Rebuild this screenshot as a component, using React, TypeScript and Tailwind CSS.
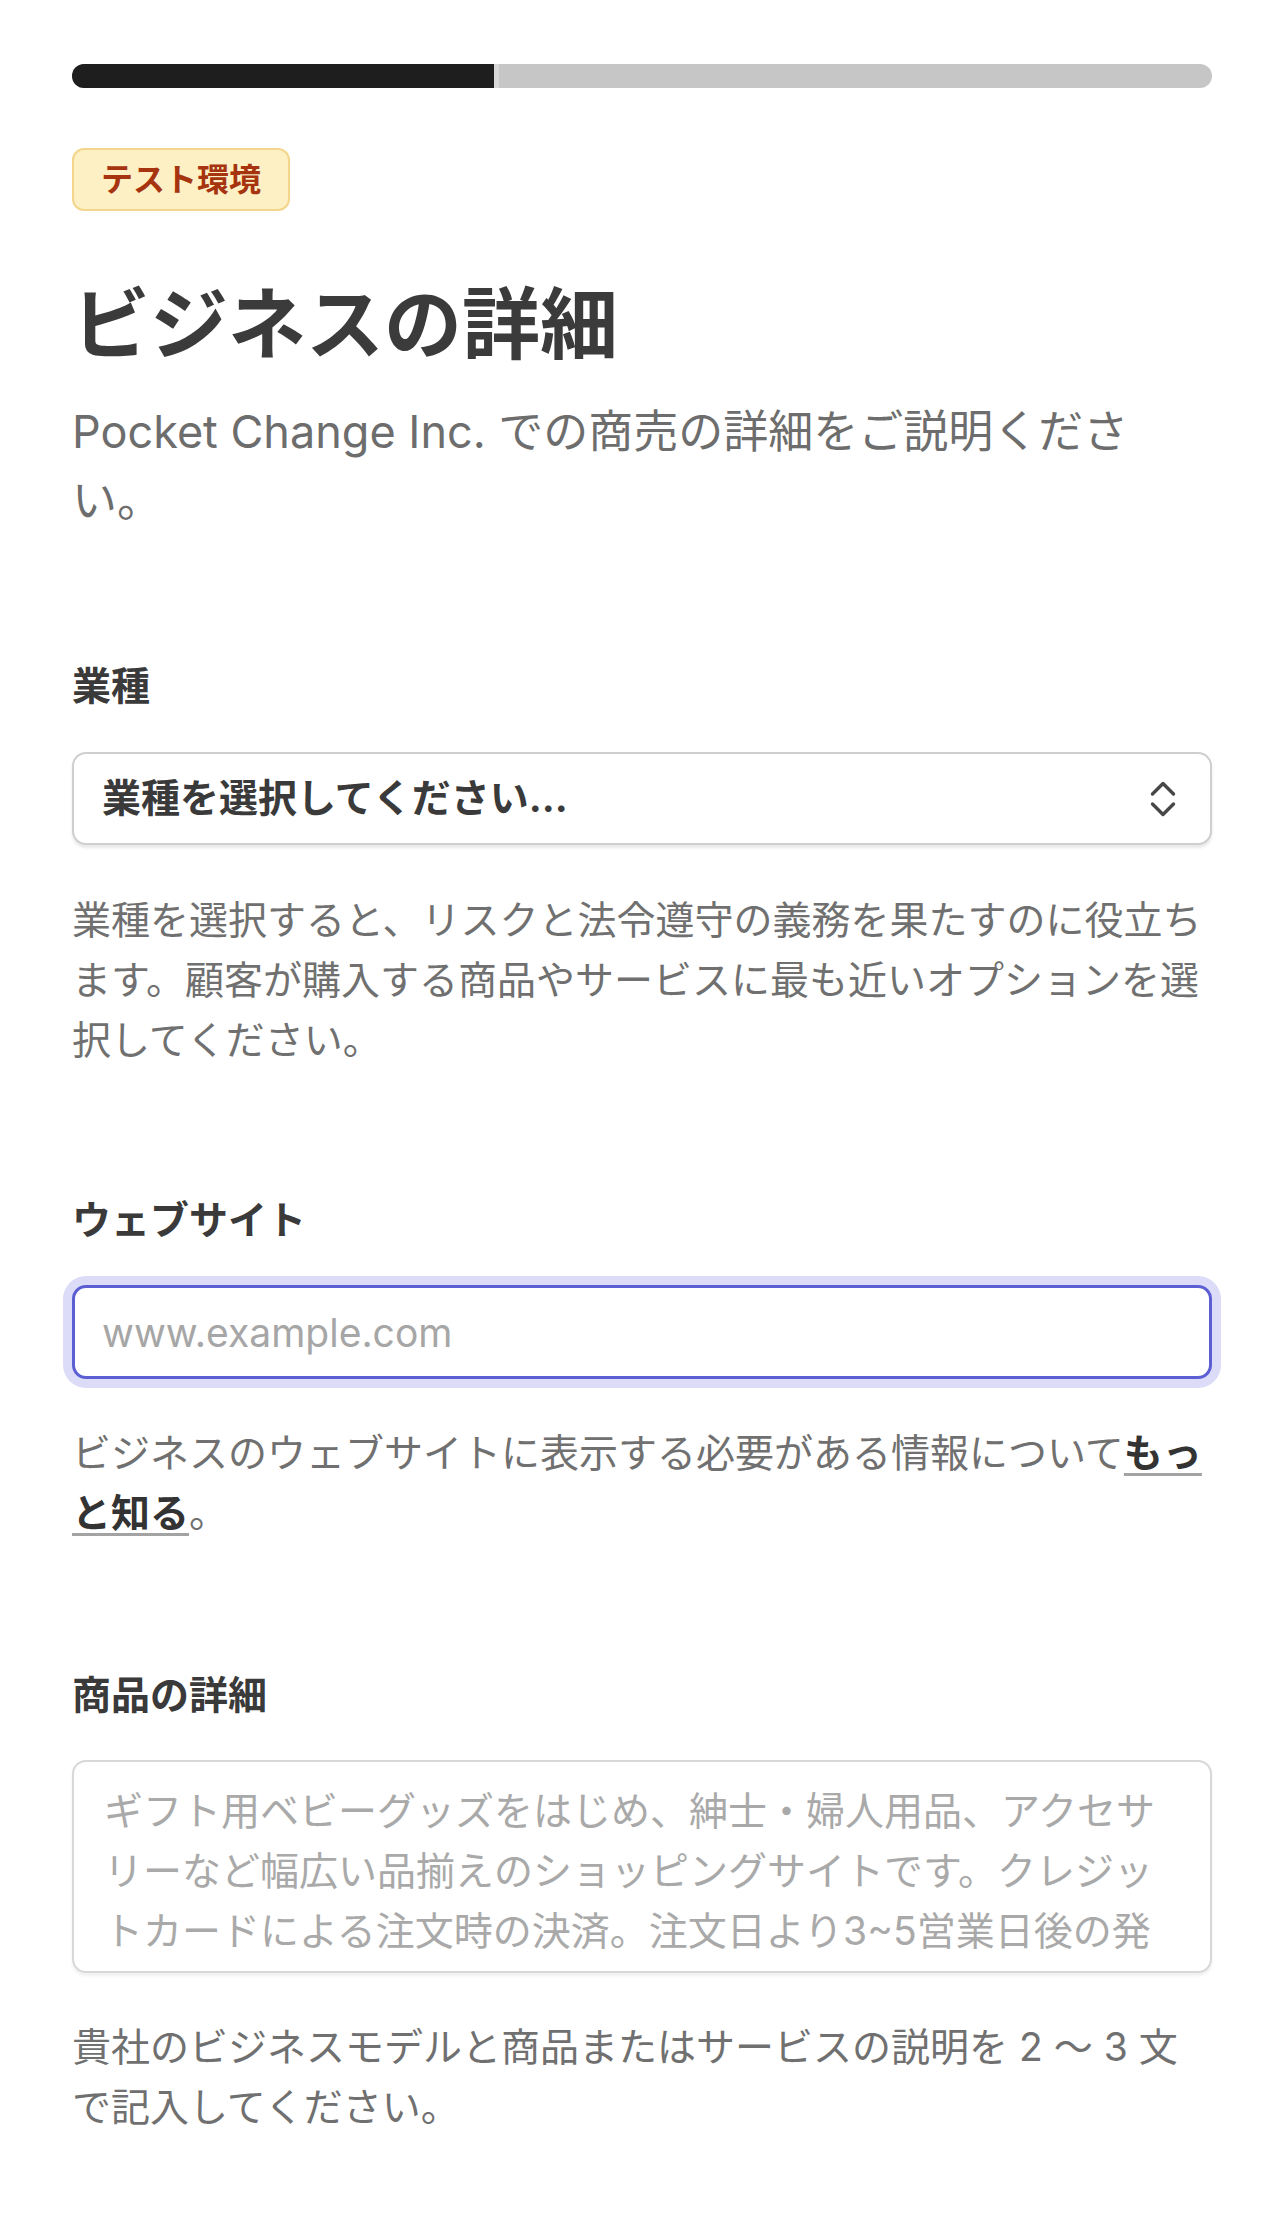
import React from "react";

function ChevronsUpDownIcon() {
    return (
        <svg
            width="28"
            height="36"
            viewBox="0 0 28 36"
            fill="none"
            stroke="#474747"
            strokeWidth="3.4"
            strokeLinecap="round"
            strokeLinejoin="round"
        >
            <path d="M3.5 13 L14 2.5 L24.5 13" />
            <path d="M3.5 23 L14 33.5 L24.5 23" />
        </svg>
    );
}

export default function App() {
    return (
        <div className="min-h-screen bg-white font-[family-name:Inter,'Noto_Sans_CJK_JP',sans-serif] text-[#3a3a3a]">
            <div className="px-[72px] pt-[64px] pb-[80px]">
                {/* progress */}
                <div className="flex h-[24px] overflow-hidden rounded-full bg-[#c6c6c6]">
                    <div className="w-[422px] bg-[#1e1e1e]" />
                    <div className="w-[5px] bg-[#d8d8d8]" />
                </div>

                <div className="mt-[60px] flex">
                    <span className="flex h-[63px] items-center rounded-[12px] border-2 border-[#f3d68c] bg-[#fdf0c4] px-[27px] text-[32px] font-bold text-[#a6340f]">
                        テスト環境
                    </span>
                </div>

                <h1 className="mt-[67px] text-[78px] leading-[94px] font-bold text-[#3b3b3b]">ビジネスの詳細</h1>
                <p className="mt-[25px] text-[45px] leading-[69px] text-[#6d6d6d]">
                    Pocket Change Inc. での商売の詳細をご説明くださ
                    <br />
                    い。
                </p>

                <section className="mt-[121px]">
                    <label className="block text-[39px] leading-[60px] font-bold text-[#3a3a3a]">業種</label>
                    <button
                        type="button"
                        className="mt-[36px] flex h-[93px] w-full items-center justify-between rounded-[14px] border-2 border-[#cfcfcf] bg-white pl-[28px] pr-[33px] shadow-[0_3px_3px_rgba(0,0,0,0.09)]"
                    >
                        <span className="text-[39px] font-bold text-[#3a3a3a]">業種を選択してください...</span>
                        <ChevronsUpDownIcon />
                    </button>
                    <p className="mt-[45px] text-[39px] leading-[60px] text-[#707070]">
                        業種を選択すると、リスクと法令遵守の義務を果たすのに役立ちます。顧客が購入する商品やサービスに最も近いオプションを選択してください。
                    </p>
                </section>

                <section className="mt-[120px]">
                    <label className="block text-[39px] leading-[60px] font-bold text-[#3a3a3a]">ウェブサイト</label>
                    <input
                        type="text"
                        placeholder="www.example.com"
                        className="mt-[35px] block h-[94px] w-full rounded-[14px] border-[3px] border-[#5c5fd4] bg-white px-[27px] text-[39px] text-[#3a3a3a] shadow-[0_0_0_9px_#dcdcf8] outline-none placeholder:text-[#a6a6a6]"
                    />
                    <p className="mt-[44px] text-[39px] leading-[60px] text-[#707070]">
                        ビジネスのウェブサイトに表示する必要がある情報について
                        <a
                            href="#"
                            className="font-bold text-[#333333] underline decoration-[#a3a3a3] decoration-[3px] underline-offset-[6px]"
                        >
                            もっと知る
                        </a>
                        。
                    </p>
                </section>

                <section className="mt-[122px]">
                    <label className="block text-[39px] leading-[60px] font-bold text-[#3a3a3a]">商品の詳細</label>
                    <textarea
                        className="mt-[35px] block h-[213px] w-full resize-none overflow-hidden rounded-[14px] border-2 border-[#d8d8d8] bg-white pt-[19px] pl-[30px] pr-[48px] text-[39px] leading-[60px] text-[#3a3a3a] outline-none shadow-[0_3px_3px_rgba(0,0,0,0.06)] placeholder:text-[#a9a9a9]"
                        placeholder="ギフト用ベビーグッズをはじめ、紳士・婦人用品、アクセサリーなど幅広い品揃えのショッピングサイトです。クレジットカードによる注文時の決済。注文日より3~5営業日後の発送となります。"
                    />
                    <p className="mt-[44px] text-[39px] leading-[60px] text-[#707070]">
                        貴社のビジネスモデルと商品またはサービスの説明を 2 〜 3 文で記入してください。
                    </p>
                </section>
            </div>
        </div>
    );
}
